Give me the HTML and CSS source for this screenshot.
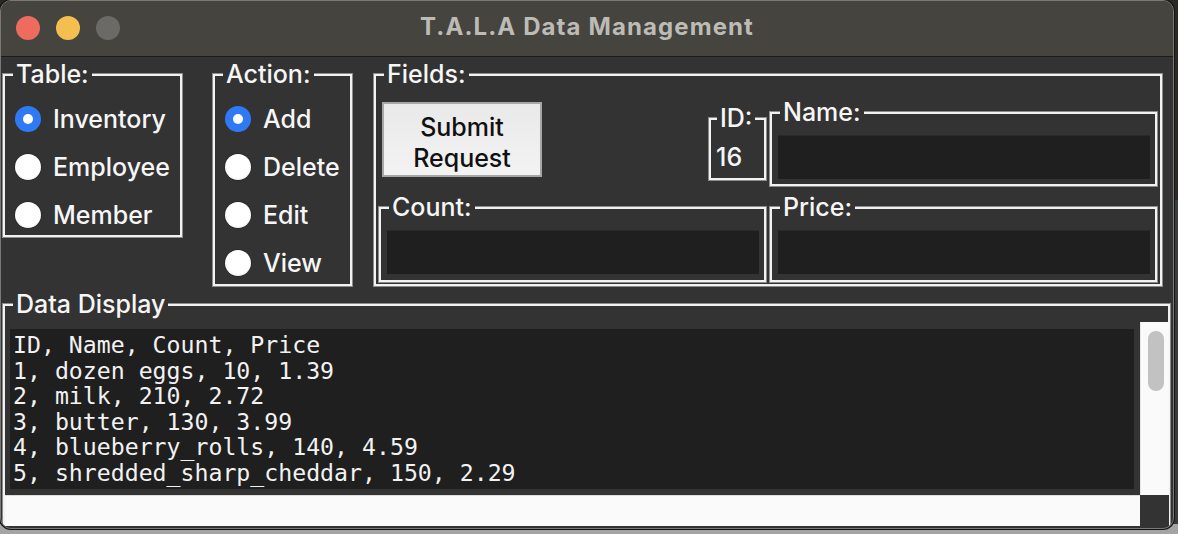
FILE: index.html
```html
<!DOCTYPE html>
<html>
<head>
<meta charset="utf-8">
<title>T.A.L.A Data Management</title>
<link rel="stylesheet" href="styles.css">
</head>
<body>
<div class="window">
  <div class="titlebar">
    <div class="lights">
      <span class="light red"></span>
      <span class="light yellow"></span>
      <span class="light grey"></span>
    </div>
    <div class="title">T.A.L.A Data Management</div>
    <div></div>
  </div>
  <div class="content">
    <div class="toprow">
      <div class="frame table-frame">
        <span class="legend">Table:</span>
        <div class="radios">
          <div class="radio-row"><span class="radio checked"></span><span>Inventory</span></div>
          <div class="radio-row"><span class="radio"></span><span>Employee</span></div>
          <div class="radio-row"><span class="radio"></span><span>Member</span></div>
        </div>
      </div>
      <div class="frame action-frame">
        <span class="legend">Action:</span>
        <div class="radios">
          <div class="radio-row"><span class="radio checked"></span><span>Add</span></div>
          <div class="radio-row"><span class="radio"></span><span>Delete</span></div>
          <div class="radio-row"><span class="radio"></span><span>Edit</span></div>
          <div class="radio-row"><span class="radio"></span><span>View</span></div>
        </div>
      </div>
      <div class="frame fields-frame">
        <span class="legend">Fields:</span>
        <div class="fields-grid">
          <div class="cell-top-left">
            <button class="submit">Submit<br>Request</button>
            <div class="frame id-frame">
              <span class="legend id-legend">ID:</span>
              <div class="id-value">16</div>
            </div>
          </div>
          <div class="frame entry-frame name-frame">
            <span class="legend">Name:</span>
            <div class="entry"></div>
          </div>
          <div class="frame entry-frame">
            <span class="legend">Count:</span>
            <div class="entry"></div>
          </div>
          <div class="frame entry-frame">
            <span class="legend">Price:</span>
            <div class="entry"></div>
          </div>
        </div>
      </div>
    </div>
    <div class="frame data-frame">
      <span class="legend">Data Display</span>
      <div class="data-grid">
        <div class="text-widget">
          <div class="text-area">ID, Name, Count, Price
1, dozen eggs, 10, 1.39
2, milk, 210, 2.72
3, butter, 130, 3.99
4, blueberry_rolls, 140, 4.59
5, shredded_sharp_cheddar, 150, 2.29</div>
        </div>
        <div class="vscroll"><div class="thumb"></div></div>
        <div class="hscroll"></div>
        <div class="corner"></div>
      </div>
    </div>
  </div>
</div>
</body>
</html>
```
FILE: styles.css
```css
* { box-sizing: border-box; }
html, body { margin: 0; padding: 0; }
body {
  width: 1178px;
  height: 534px;
  overflow: hidden;
  background: linear-gradient(to bottom, #2c2824 0, #2c2824 200px, #3a3a3a 200px, #3a3a3a 524px, #a4a4a4 524px);
  font-family: "Inter", "Liberation Sans", sans-serif;
}
.window {
  width: 1174px;
  height: 529px;
  border: 1px solid #7a7977;
  border-radius: 11px;
  overflow: hidden;
  background: #333333;
  box-shadow: 0 0 0 1px #151515;
}
.titlebar {
  height: 56px;
  background: #46443f;
  border-bottom: 1px solid #1b1b1b;
  display: grid;
  grid-template-columns: 1fr auto 1fr;
  align-items: center;
}
.lights {
  display: flex;
  gap: 16px;
  padding-left: 15px;
  margin-bottom: 1px;
}
.light {
  width: 24px;
  height: 24px;
  border-radius: 50%;
  display: block;
}
.red { background: #ee6b60; }
.yellow { background: #f5bf4f; }
.grey { background: #6b6a66; }
.title {
  font-family: "Inter", "Liberation Sans", sans-serif;
  font-weight: 700;
  font-size: 24px;
  color: #bdbbb6;
  margin-bottom: 5px;
  letter-spacing: 1.1px;
}
.content {
  padding: 16px 0 0 1px;
  color: #f6f6f6;
  font-size: 25px;
  font-weight: 500;
}
.toprow {
  display: flex;
  align-items: flex-start;
}
.frame {
  position: relative;
  border: 1px solid #8c8c8c;
  box-shadow: inset 0 0 0 2px #f2f2f2;
}
.legend {
  position: absolute;
  top: -15px;
  left: 10px;
  padding: 0 3px;
  background: #333333;
  line-height: 30px;
  font-size: 25px;
  color: #f6f6f6;
  white-space: nowrap;
}
.table-frame { width: 181px; height: 165px; }
.action-frame { width: 141px; height: 214px; margin-left: 29px; }
.fields-frame { width: 790px; height: 214px; margin-left: 20px; }
.radios { padding: 21px 0 0 12px; }
.radio-row {
  height: 48px;
  display: flex;
  align-items: center;
  gap: 12px;
  line-height: 30px;
}
.radio {
  width: 26px;
  height: 26px;
  border-radius: 50%;
  background: radial-gradient(circle at 50% 45%, #ffffff 0, #ffffff 58%, #e2e2e2 100%);
  box-shadow: 0 0 1px 0.5px rgba(0,0,0,0.35);
  flex: none;
  display: flex;
  align-items: center;
  justify-content: center;
}
.radio.checked {
  background: #3079f5;
  box-shadow: none;
}
.radio.checked::after {
  content: "";
  width: 10px;
  height: 10px;
  border-radius: 50%;
  background: #ffffff;
}
.fields-grid {
  display: grid;
  grid-template-columns: 389px 389px;
  grid-template-rows: 85px 77px;
  column-gap: 2px;
  row-gap: 19px;
  padding: 28px 4px 0 4px;
}
.cell-top-left {
  display: flex;
  justify-content: space-between;
  align-items: flex-start;
}
.submit {
  margin: 0 0 0 4px;
  width: 160px;
  height: 75px;
  border: 2px solid #a6a6a6;
  background: linear-gradient(to bottom, #e9e9e9, #f3f3f3);
  font-family: "Inter", "Liberation Sans", sans-serif;
  font-size: 25px;
  font-weight: 500;
  line-height: 31px;
  color: #111111;
  padding: 6px 0 0 0;
  text-align: center;
}
.id-frame {
  width: 59px;
  height: 64px;
  margin-top: 15px;
}
.id-legend { left: 8px; }
.id-value {
  padding: 24px 0 0 7px;
  line-height: 30px;
}
.name-frame { margin-top: 9px; height: 76px; }
.entry-frame { padding: 23px 7px 0 8px; }
.entry {
  height: 44px;
  background: #1f1f1f;
  border-top: 1px solid #2a2a2a;
}
.data-frame {
  width: 1169px;
  height: 260px;
  margin-top: 16px;
  padding: 18px 1px 0 2px;
}
.data-grid {
  display: grid;
  grid-template-columns: 1135px 29px;
  grid-template-rows: 173px 31px;
}
.text-widget {
  background: #333333;
  padding: 7px 6px 6px 5px;
}
.text-area {
  height: 100%;
  background: #1f1f1f;
  padding: 3px 0 0 3px;
  font-family: "DejaVu Sans Mono", "Liberation Mono", monospace;
  font-size: 23.2px;
  font-weight: 400;
  line-height: 25.6px;
  color: #f2f2f2;
  white-space: pre;
  overflow: hidden;
}
.vscroll {
  background: #fafafa;
  border-left: 1px solid #e6e6e6;
  padding: 9px 0 0 7px;
}
.thumb {
  width: 16px;
  height: 60px;
  border-radius: 8px;
  background: #c2c2c2;
}
.hscroll {
  background: #fafafa;
  border-top: 1px solid #dcdcdc;
}
.corner { background: #333333; }
```
